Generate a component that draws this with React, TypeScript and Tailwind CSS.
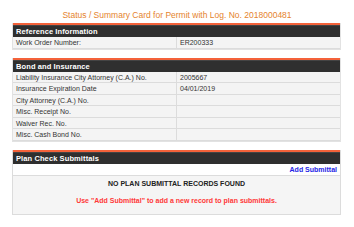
import React from "react";

const Row = ({ label, value }: { label: string; value?: string }) => (
  <div className="grid grid-cols-[164px_1fr] h-[11.5px] border-b border-[#dcdcdc] bg-[#f4f4f4] text-[7px] leading-[11px] text-[#333]">
    <div className="pl-[3px] border-r border-[#dcdcdc] whitespace-nowrap overflow-hidden">{label}</div>
    <div className="pl-[3px] whitespace-nowrap">{value ?? ""}</div>
  </div>
);

const Header = ({ title }: { title: string }) => (
  <div className="border-t-2 border-[#f4623a]">
    <div className="h-[12px] bg-[#2f2f2f] border-t border-[#444] pl-[3px] text-[7.5px] leading-[11px] font-bold text-white tracking-[0.1px]">
      {title}
    </div>
  </div>
);

export default function App() {
  return (
    <div className="w-[354px] h-[227px] bg-white font-['Liberation_Sans',Arial,sans-serif] overflow-hidden">
      <div className="h-[23px] pt-[9px] text-center text-[8.5px] leading-[12px] text-[#e5832d]">
        Status / Summary Card for Permit with Log. No. 2018000481
      </div>
      <div className="mx-[12px] w-[329px] flex flex-col gap-[8px]">
        <div className="border-x border-b border-[#e2e2e2]">
          <Header title="Reference Information" />
          <Row label="Work Order Number:" value="ER200333" />
        </div>
        <div className="border-x border-b border-[#e2e2e2]">
          <Header title="Bond and Insurance" />
          <Row label="Liability Insurance City Attorney (C.A.) No." value="2005667" />
          <Row label="Insurance Expiration Date" value="04/01/2019" />
          <Row label="City Attorney (C.A.) No." />
          <Row label="Misc. Receipt No." />
          <Row label="Waiver Rec. No." />
          <Row label="Misc. Cash Bond No." />
        </div>
        <div className="border-x border-b border-[#dcdcdc]">
          <Header title="Plan Check Submittals" />
          <div className="h-[12px] bg-white border-b border-[#dcdcdc] text-right pr-[3px] text-[7px] leading-[12px] font-bold text-[#2424e6]">
            Add Submittal
          </div>
          <div className="h-[38px] bg-[#f5f5f5] flex flex-col items-center pt-[2px]">
            <div className="text-[7px] leading-[12px] font-bold text-[#222]">NO PLAN SUBMITTAL RECORDS FOUND</div>
            <div className="mt-[5px] text-[7px] leading-[12px] font-bold text-[#ff3838]">
              Use "Add Submittal" to add a new record to plan submittals.
            </div>
          </div>
        </div>
      </div>
    </div>
  );
}
